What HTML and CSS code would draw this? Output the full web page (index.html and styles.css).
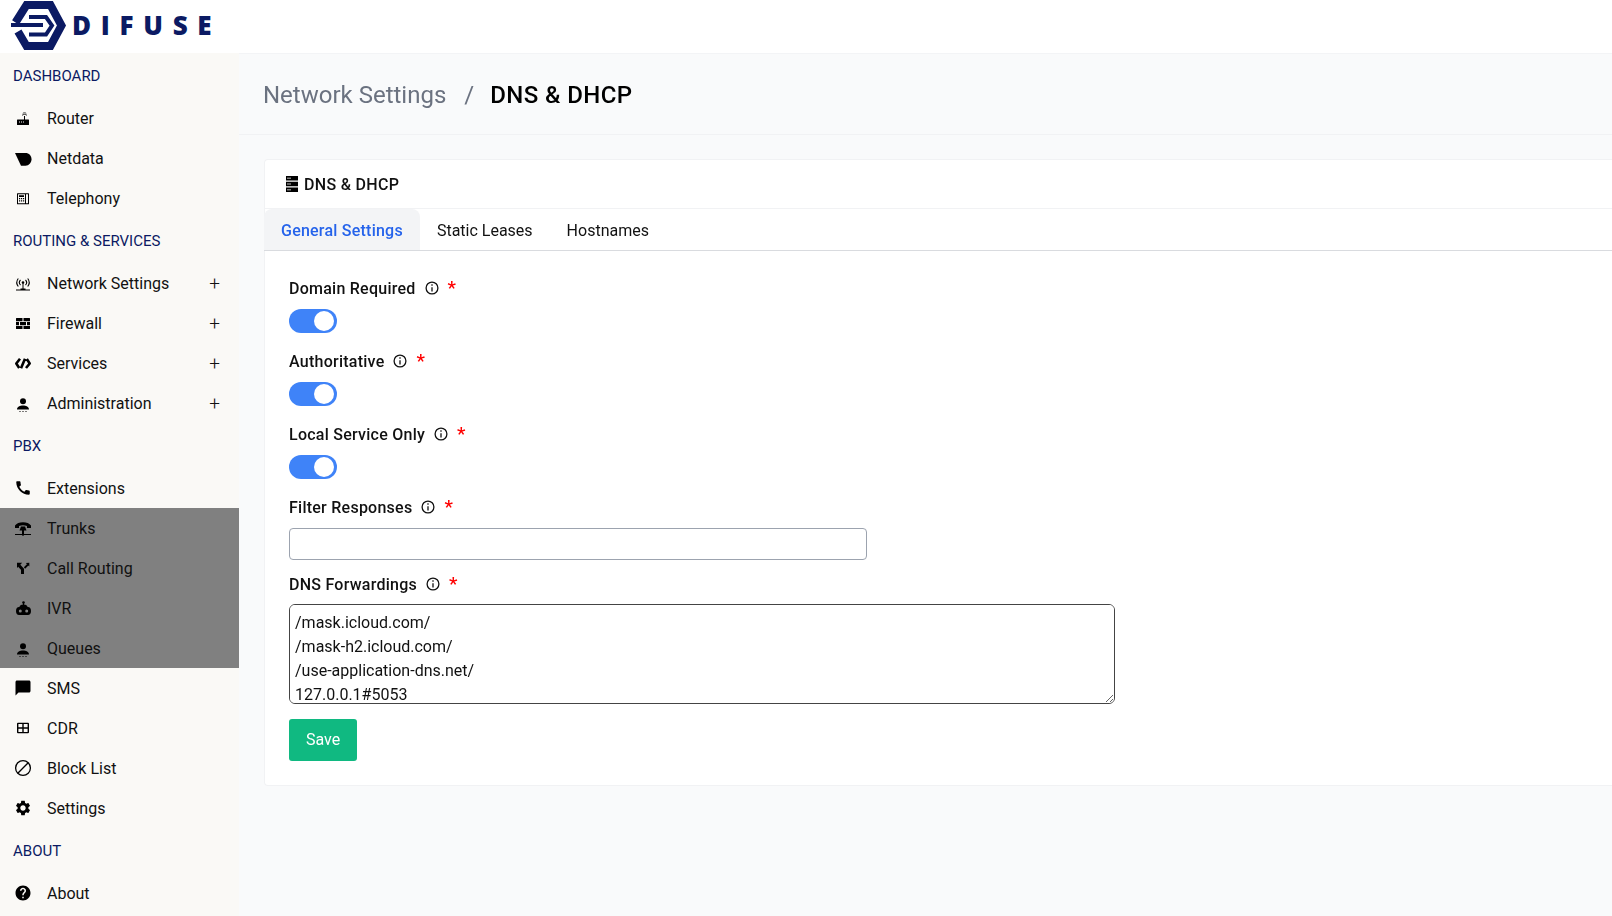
FILE: index.html
```html
<!DOCTYPE html>
<html lang="en">
<head>
  <meta charset="UTF-8" />
  <title>Difuse - DNS &amp; DHCP</title>
  <link rel="stylesheet" href="styles.css">
</head>
<body>
  <header class="topbar">
    <svg class="logo-mark" viewBox="10 0 57 52">
      <path class="logo-line" stroke-width="8" d="M15.500 22.500L26.500 5H50.500L61.500 25.500L50.500 46H26.500L18 31.500"/>
      <path class="logo-line" stroke-width="4" d="M29 17H46L52 25.500L46 34.500H29"/>
      <path class="logo-line" stroke-width="4" d="M11 25H43"/>
    </svg>
    <span class="logo-text">DIFUSE</span>
  </header>
  <div class="layout">
    <aside class="sidebar">
      <h4 class="nav-head">DASHBOARD</h4>
      <a class="nav-item"><svg class="ico" viewBox="0 0 18 18"><path fill-rule="evenodd" d="M3.500 10.500H10V7h1v3.500h3.500a.5.5 0 0 1 .5.500V15.500a.5.5 0 0 1-.5.500h-11a.5.5 0 0 1-.5-.500V11a.5.500 0 0 1 .5-.500zM5 12.500v1h1v-1zm2 0v1h1v-1zm2 0v1h1v-1z"/><path fill="none" stroke="#000" stroke-width=".8" d="M8 6.300c1.500-1.200 3.500-1.200 5 0M8.800 4.300c1-.6 2.400-.6 3.400 0"/></svg>Router</a>
      <a class="nav-item"><svg class="ico" viewBox="0 0 18 18"><path d="M1 4h10.500c3.500 0 6 2.700 6 6.300s-2.700 6.400-6 6.400H7z"/></svg>Netdata</a>
      <a class="nav-item"><svg class="ico" viewBox="0 0 18 18"><path fill-rule="evenodd" d="M3.500 4.300h11a.5.5 0 0 1 .5.500v10a.5.5 0 0 1-.5.500h-11a.5.5 0 0 1-.5-.500v-10a.5.5 0 0 1 .5-.500zm.5 1v9h7v-9zm8 0v9h2v-9zM5 6.300h5v1.700H5zM5 9h1.200v1.200H5zm2 0h1.200v1.200H7zm2 0h1.200v1.200H9zm-4 2.200h1.200v1.200H5zm2 0h1.200v1.200H7zm2 0h1.200v1.200H9z"/></svg>Telephony</a>

      <h4 class="nav-head">ROUTING &amp; SERVICES</h4>
      <a class="nav-item"><svg class="ico" viewBox="0 0 18 18"><circle cx="9" cy="8.500" r="1.300"/><path d="M8.500 9h1v6.500h-1zM2 15.500h14v1H2zM6.500 14.500h5v1h-5z"/><path fill="none" stroke="#000" stroke-width="1.100" d="M6.500 6a3.600 3.600 0 0 0 0 5M11.500 6a3.600 3.600 0 0 1 0 5M4.300 4.500a6.500 6.500 0 0 0 0 8M13.700 4.500a6.500 6.500 0 0 1 0 8"/></svg>Network Settings<span class="plus">+</span></a>
      <a class="nav-item"><svg class="ico" viewBox="0 0 18 18"><path d="M2 4.500a.5.5 0 0 1 .5-.500H8.500v3.200H2zM9.500 4h6a.5.5 0 0 1 .5.500v2.700H9.500zM2 8h3v3.200H2zM6 8h6v3.200H6zM13 8h3v3.200h-3zM2 12h6.500v3h-6a.5.5 0 0 1-.5-.500zM9.500 12H16v2.500a.5.5 0 0 1-.5.500h-6z"/></svg>Firewall<span class="plus">+</span></a>
      <a class="nav-item"><svg class="ico" viewBox="0 0 18 18"><path fill="none" stroke="#000" stroke-width="2.600" stroke-linejoin="round" d="M6 4.800L2.300 9.500L5.200 14M12.800 5L15.700 9.500L12 14M11 4.800L7 14.200"/></svg>Services<span class="plus">+</span></a>
      <a class="nav-item"><svg class="ico" viewBox="0 0 18 18"><circle cx="9" cy="7.200" r="3"/><path d="M3 15.500c0-2.800 3-4 6-4s6 1.200 6 4zM5 17.500h2v1H5zM8 17.500h2v1H8zM11 17.500h2v1h-2z"/></svg>Administration<span class="plus">+</span></a>

      <h4 class="nav-head">PBX</h4>
      <a class="nav-item"><svg class="ico" viewBox="0 0 24 24"><path d="M20.010 15.380c-1.230 0-2.420-.2-3.530-.56-.35-.12-.74-.03-1.010.24l-1.570 1.970c-2.830-1.350-5.480-3.900-6.890-6.830l1.950-1.660c.27-.28.35-.67.24-1.020-.37-1.110-.56-2.300-.56-3.530 0-.54-.45-.99-.99-.99H4.190C3.650 3 3 3.240 3 3.990 3 13.280 10.730 21 20.010 21c.71 0 .99-.63.99-1.180v-3.450c0-.54-.45-.99-.99-.99z"/></svg>Extensions</a>
      <div class="nav-shade">
        <a class="nav-item"><svg class="ico" viewBox="0 0 18 18"><path d="M1 6.500C3.500 2 14.500 2 17 6.500V9h-4V7c-2.500-1-5.500-1-8 0v2H1z"/><path d="M7 7.500h4L12.500 11.500H10V15H8V11.500H5.500z"/><path d="M1 15h16v1H1z"/><circle cx="9" cy="15.500" r="1.200"/></svg>Trunks</a>
        <a class="nav-item"><svg class="ico" viewBox="0 0 18 18"><path fill="none" stroke="#000" stroke-width="3" d="M8.500 15V10.300L5 6.500"/><path d="M3 3.800h5.200L3 9z"/><path fill="none" stroke="#000" stroke-width="1.800" d="M10.500 9L14 5.500"/><path d="M15.300 3.800V7.500L11.800 4z"/></svg>Call Routing</a>
        <a class="nav-item"><svg class="ico" viewBox="0 0 18 18"><circle cx="9.500" cy="3.600" r="1.300"/><path fill-rule="evenodd" d="M9 4h1v1.500c2 .2 3.200 1 3.600 2.500h.4c1.800 0 3 1.500 3 4s-1.200 4-3 4H5c-1.800 0-3-1.500-3-4s1.200-4 3-4h.4C5.800 6.500 7 5.700 9 5.500zM6.300 10.500a1.500 1.500 0 1 0 0 3 1.500 1.500 0 0 0 0-3zm6.400 0a1.500 1.500 0 1 0 0 3 1.500 1.500 0 0 0 0-3z"/></svg>IVR</a>
        <a class="nav-item"><svg class="ico" viewBox="0 0 18 18"><circle cx="9" cy="7.200" r="3"/><path d="M3 15.500c0-2.800 3-4 6-4s6 1.200 6 4zM5 17.500h2v1H5zM8 17.500h2v1H8zM11 17.500h2v1h-2z"/></svg>Queues</a>
      </div>
      <a class="nav-item"><svg class="ico" viewBox="0 0 24 24"><path d="M20 2H4c-1.100 0-2 .9-2 2v18l4-4h14c1.100 0 2-.9 2-2V4c0-1.100-.9-2-2-2z"/></svg>SMS</a>
      <a class="nav-item"><svg class="ico" viewBox="0 0 18 18"><path fill-rule="evenodd" d="M4 3.700h10a1 1 0 0 1 1 1v8.600a1 1 0 0 1-1 1H4a1 1 0 0 1-1-1V4.700a1 1 0 0 1 1-1zm.4 1.400v3.200h3.900V5.100zm5.300 0v3.200h3.900V5.100zM4.400 9.700v3.200h3.900V9.700zm5.300 0v3.200h3.900V9.700z"/></svg>CDR</a>
      <a class="nav-item"><svg class="ico" viewBox="0 0 18 18"><circle cx="9" cy="9" r="7.400" fill="none" stroke="#000" stroke-width="1.300"/><path d="M3.800 14.200L14.200 3.800" stroke="#000" stroke-width="1.300"/></svg>Block List</a>
      <a class="nav-item"><svg class="ico" viewBox="0 0 24 24"><path d="M19.140 12.940c.04-.3.06-.61.06-.94 0-.32-.02-.64-.07-.94l2.030-1.580c.18-.14.23-.41.12-.61l-1.920-3.320c-.12-.22-.37-.29-.59-.22l-2.390.96c-.5-.38-1.030-.7-1.620-.94l-.36-2.540c-.04-.24-.24-.41-.48-.41h-3.840c-.24 0-.43.17-.47.41l-.36 2.540c-.59.24-1.130.57-1.620.94l-2.390-.96c-.22-.08-.47 0-.59.22L2.740 8.870c-.12.21-.08.47.12.61l2.030 1.580c-.05.3-.09.63-.09.94s.02.64.07.94l-2.030 1.580c-.18.14-.23.41-.12.61l1.920 3.320c.12.22.37.29.59.22l2.390-.96c.5.38 1.030.7 1.620.94l.36 2.540c.05.24.24.41.48.41h3.840c.24 0 .44-.17.47-.41l.36-2.540c.59-.24 1.130-.56 1.620-.94l2.390.96c.22.08.47 0 .59-.22l1.920-3.320c.12-.22.07-.47-.12-.61l-2.010-1.580zM12 15.600c-1.980 0-3.600-1.620-3.600-3.600s1.620-3.600 3.600-3.600 3.600 1.620 3.600 3.600-1.620 3.600-3.600 3.600z"/></svg>Settings</a>

      <h4 class="nav-head">ABOUT</h4>
      <a class="nav-item"><svg class="ico" viewBox="0 0 24 24"><path d="M12 2C6.480 2 2 6.480 2 12s4.480 10 10 10 10-4.480 10-10S17.520 2 12 2zm1 17h-2v-2h2v2zm2.070-7.750l-.9.92C13.450 12.900 13 13.500 13 15h-2v-.5c0-1.100.45-2.100 1.170-2.830l1.240-1.260c.37-.36.59-.86.59-1.410 0-1.100-.9-2-2-2s-2 .9-2 2H8c0-2.210 1.790-4 4-4s4 1.790 4 4c0 .88-.36 1.680-.93 2.250z"/></svg>About</a>
    </aside>

    <main class="content">
      <div class="crumbs">
        <span class="crumb-parent">Network Settings</span>
        <span class="crumb-sep">/</span>
        <span class="crumb-current">DNS &amp; DHCP</span>
      </div>
      <section class="card">
        <div class="card-title"><svg class="title-ico" viewBox="0 0 12 16"><path fill-rule="evenodd" d="M0 0h12v4.500H0zm1.500 1.500v1.500h1V1.500zm2 0v1.500h1V1.500zM0 5.700h12v4.500H0zm1.500 1.500v1.500h1V7.200zm2 0v1.500h1V7.200zM0 11.400h12V16H0zm1.500 1.500v1.500h1v-1.500zm2 0v1.500h1v-1.500z"/></svg>DNS &amp; DHCP</div>
        <div class="tabs">
          <a class="tab tab-active">General Settings</a>
          <a class="tab">Static Leases</a>
          <a class="tab">Hostnames</a>
        </div>
        <form class="form">
          <label class="field-label">Domain Required<svg class="info" viewBox="0 0 14 14"><circle cx="7" cy="7" r="5.900"/><path d="M7 6.200v4.300M7 3.300v1.500"/></svg><span class="req">*</span></label>
          <span class="toggle"></span>
          <label class="field-label">Authoritative<svg class="info" viewBox="0 0 14 14"><circle cx="7" cy="7" r="5.900"/><path d="M7 6.200v4.300M7 3.300v1.500"/></svg><span class="req">*</span></label>
          <span class="toggle"></span>
          <label class="field-label">Local Service Only<svg class="info" viewBox="0 0 14 14"><circle cx="7" cy="7" r="5.900"/><path d="M7 6.200v4.300M7 3.300v1.500"/></svg><span class="req">*</span></label>
          <span class="toggle"></span>
          <label class="field-label">Filter Responses<svg class="info" viewBox="0 0 14 14"><circle cx="7" cy="7" r="5.900"/><path d="M7 6.200v4.300M7 3.300v1.500"/></svg><span class="req">*</span></label>
          <input class="text-input" type="text" />
          <label class="field-label">DNS Forwardings<svg class="info" viewBox="0 0 14 14"><circle cx="7" cy="7" r="5.900"/><path d="M7 6.200v4.300M7 3.300v1.500"/></svg><span class="req">*</span></label>
          <textarea class="text-area">/mask.icloud.com/
/mask-h2.icloud.com/
/use-application-dns.net/
127.0.0.1#5053</textarea>
          <button class="save" type="button">Save</button>
        </form>
      </section>
    </main>
  </div>
</body>
</html>
```

FILE: styles.css
```css
* {
  box-sizing: border-box;
}

body {
  margin: 0;
  height: 916px;
  overflow: hidden;
  font-family: Roboto, sans-serif;
  font-size: 16px;
  color: #111;
  background: #fff;
}

.topbar {
  height: 53px;
  display: flex;
  padding-left: 10px;
  background: #fff;
}

.logo-mark {
  width: 57px;
  height: 52px;
}

.logo-line {
  fill: none;
  stroke: #0b1a63;
}

.logo-text {
  margin-left: 5px;
  font-family: "Open Sans", sans-serif;
  font-weight: 800;
  font-size: 26px;
  line-height: 50px;
  letter-spacing: 9.700px;
  color: #0b1a63;
}

.layout {
  display: flex;
  height: 863px;
}

.sidebar {
  width: 239px;
  flex: none;
  background: #faf9f6;
}

.nav-head {
  margin: 0;
  height: 45px;
  padding-left: 13px;
  line-height: 46px;
  font-size: 15px;
  font-weight: 400;
  color: #0b1a63;
}

.nav-item {
  display: flex;
  align-items: center;
  height: 40px;
  padding-left: 14px;
  padding-right: 19px;
  font-size: 16px;
  color: #111;
}

.nav-shade {
  background: #808080;
}

.ico {
  width: 18px;
  height: 18px;
  flex: none;
  margin-right: 15px;
}

.plus {
  margin-left: auto;
  font-size: 19px;
  font-weight: 300;
}

.content {
  flex: 1;
  background: #f9fafb;
}

.crumbs {
  height: 82px;
  display: flex;
  align-items: center;
  padding: 1px 0 0 24px;
  font-size: 24px;
  border-top: 1px solid #f3f4f6;
  border-bottom: 1px solid #f1f2f4;
}

.crumb-parent {
  color: #6b7280;
}

.crumb-sep {
  margin: 0 16px 0 18px;
  color: #6b7280;
}

.crumb-current {
  color: #000;
  font-weight: 500;
  letter-spacing: .4px;
}

.card {
  margin: 24px 0 0 25px;
  height: 627px;
  background: #fff;
  border: 1px solid #f1f2f4;
  border-right: 0;
  border-radius: 4px 0 0 4px;
}

.card-title {
  height: 49px;
  display: flex;
  align-items: center;
  padding-left: 21px;
  font-size: 16px;
  font-weight: 500;
  letter-spacing: .3px;
  color: #111;
  border-bottom: 1px solid #f1f2f4;
}

.title-ico {
  width: 12px;
  height: 16px;
  margin-right: 6px;
}

.tabs {
  display: flex;
  height: 42px;
  margin-left: -1px;
  border-bottom: 1px solid #d9dbdf;
}

.tab {
  height: 41px;
  padding: 0 17px;
  line-height: 44px;
  border-radius: 8px 8px 0 0;
  font-size: 16px;
}

.tab-active {
  background: #f3f4f6;
  color: #2563eb;
  font-weight: 500;
  letter-spacing: .23px;
}

.form {
  padding: 25px 24px 0;
}

.field-label {
  display: flex;
  align-items: center;
  height: 24px;
  margin-bottom: 9px;
  font-size: 16px;
  font-weight: 500;
  letter-spacing: .25px;
  color: #111;
}

.info {
  width: 14px;
  height: 14px;
  margin-left: 9px;
  fill: none;
  stroke: #111;
  stroke-width: 1.300;
}

.req {
  margin-left: 9px;
  margin-top: -2px;
  font-size: 19px;
  color: #f00;
}

.toggle {
  display: block;
  position: relative;
  width: 48px;
  height: 24px;
  margin-bottom: 16px;
  border-radius: 12px;
  background: #3f83f8;
}

.toggle::after {
  content: "";
  position: absolute;
  top: 2px;
  right: 3px;
  width: 20px;
  height: 20px;
  border-radius: 50%;
  background: #fff;
}

.text-input {
  display: block;
  width: 578px;
  height: 32px;
  margin-bottom: 12px;
  border: 1px solid #9ca3af;
  border-radius: 4px;
  background: #fff;
}

.text-area {
  display: block;
  width: 826px;
  height: 100px;
  margin-top: -1px;
  padding: 6px 5px;
  border: 1px solid #444;
  border-radius: 6px;
  font: 16px/24px Roboto, sans-serif;
  color: #111;
  background: #fff;
  outline: 0;
}

.save {
  display: block;
  width: 68px;
  height: 42px;
  margin-top: 15px;
  padding-bottom: 3px;
  border: 0;
  border-radius: 3px;
  background: #10b981;
  color: #fff;
  font: 16px Roboto, sans-serif;
}
```
